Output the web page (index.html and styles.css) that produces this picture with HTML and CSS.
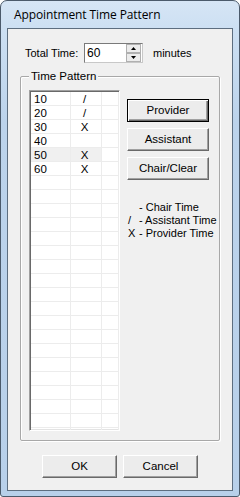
FILE: index.html
```html
<!DOCTYPE html>
<html>
<head>
<meta charset="utf-8">
<link rel="stylesheet" href="styles.css">
</head>
<body>
<div class="window">
  <div class="titlebar">Appointment Time Pattern</div>
  <div class="client">
    <div class="total-row">
      <span class="total-label">Total Time:</span>
      <div class="spin">
        <span class="spin-value">60</span>
        <div class="spin-btns">
          <div class="spin-btn"><svg width="5" height="3" viewBox="0 0 5 3"><path d="M2.5 0 L5 3 L0 3 Z" fill="#000"/></svg></div>
          <div class="spin-btn"><svg width="5" height="3" viewBox="0 0 5 3"><path d="M0 0 L5 0 L2.5 3 Z" fill="#000"/></svg></div>
        </div>
      </div>
      <span class="minutes">minutes</span>
    </div>
    <div class="group">
      <span class="group-title">Time Pattern</span>
      <div class="group-body">
        <div class="list">
          <div class="row"><span class="c1">10</span><span class="c2">/</span><span class="c3"></span></div>
          <div class="row"><span class="c1">20</span><span class="c2">/</span><span class="c3"></span></div>
          <div class="row"><span class="c1">30</span><span class="c2">X</span><span class="c3"></span></div>
          <div class="row"><span class="c1">40</span><span class="c2"></span><span class="c3"></span></div>
          <div class="row sel"><span class="c1">50</span><span class="c2">X</span><span class="c3"></span></div>
          <div class="row"><span class="c1">60</span><span class="c2">X</span><span class="c3"></span></div>
          <div class="row"><span class="c1"></span><span class="c2"></span><span class="c3"></span></div>
          <div class="row"><span class="c1"></span><span class="c2"></span><span class="c3"></span></div>
          <div class="row"><span class="c1"></span><span class="c2"></span><span class="c3"></span></div>
          <div class="row"><span class="c1"></span><span class="c2"></span><span class="c3"></span></div>
          <div class="row"><span class="c1"></span><span class="c2"></span><span class="c3"></span></div>
          <div class="row"><span class="c1"></span><span class="c2"></span><span class="c3"></span></div>
          <div class="row"><span class="c1"></span><span class="c2"></span><span class="c3"></span></div>
          <div class="row"><span class="c1"></span><span class="c2"></span><span class="c3"></span></div>
          <div class="row"><span class="c1"></span><span class="c2"></span><span class="c3"></span></div>
          <div class="row"><span class="c1"></span><span class="c2"></span><span class="c3"></span></div>
          <div class="row"><span class="c1"></span><span class="c2"></span><span class="c3"></span></div>
          <div class="row"><span class="c1"></span><span class="c2"></span><span class="c3"></span></div>
          <div class="row"><span class="c1"></span><span class="c2"></span><span class="c3"></span></div>
          <div class="row"><span class="c1"></span><span class="c2"></span><span class="c3"></span></div>
          <div class="row"><span class="c1"></span><span class="c2"></span><span class="c3"></span></div>
          <div class="row"><span class="c1"></span><span class="c2"></span><span class="c3"></span></div>
          <div class="row"><span class="c1"></span><span class="c2"></span><span class="c3"></span></div>
          <div class="row"><span class="c1"></span><span class="c2"></span><span class="c3"></span></div>
          <div class="row"><span class="c1"></span><span class="c2"></span><span class="c3"></span></div>
        </div>
        <div class="side">
          <div class="btn default">Provider</div>
          <div class="btn">Assistant</div>
          <div class="btn">Chair/Clear</div>
          <div class="legend">
            <span class="sym"></span><span>- Chair Time</span>
            <span class="sym">/</span><span>- Assistant Time</span>
            <span class="sym">X</span><span>- Provider Time</span>
          </div>
        </div>
      </div>
    </div>
    <div class="footer">
      <div class="btn small">OK</div>
      <div class="btn small">Cancel</div>
    </div>
  </div>
</div>
</body>
</html>
```

FILE: styles.css
```css
html, body {
  margin: 0;
  padding: 0;
  background: #ffffff;
}
body {
  font-family: "Liberation Sans", Arial, sans-serif;
  font-size: 11px;
  color: #000;
}
.window {
  width: 240px;
  height: 497px;
  box-sizing: border-box;
  border: 1px solid #4b5a6b;
  border-radius: 7px 7px 3px 3px;
  background: linear-gradient(#d6e5f5 0px, #cde0f3 26px, #bcd3eb 120px, #b8d0ea 100%);
  padding: 0 6px 5px 6px;
  display: flex;
  flex-direction: column;
}
.titlebar {
  height: 27px;
  line-height: 27px;
  padding-left: 7px;
  font-size: 12px;
  font-family: "Open Sans", "Liberation Sans", sans-serif;
  letter-spacing: -0.1px;
  flex: none;
}
.client {
  flex: 1;
  border: 1px solid #5d6e80;
  background: #f0f0f0;
  display: flex;
  flex-direction: column;
}
.total-row {
  display: flex;
  align-items: center;
  margin-top: 14px;
  padding-left: 17px;
  height: 20px;
}
.total-label {
  width: 59px;
}
.spin {
  width: 59px;
  height: 20px;
  box-sizing: border-box;
  border: 1px solid #7a7a7a;
  border-right-color: #c8c8c8;
  border-bottom-color: #c8c8c8;
  background: #fff;
  display: flex;
  align-items: stretch;
}
.spin-value {
  flex: 1;
  padding-left: 2px;
  font-size: 12px;
  line-height: 18px;
}
.spin-btns {
  width: 15px;
  display: flex;
  flex-direction: column;
  padding: 0 1px 0 0;
}
.spin-btn {
  flex: 1;
  box-sizing: border-box;
  border: 1px solid #b0b0b0;
  background: #ececec;
  display: flex;
  align-items: center;
  justify-content: center;
}
.minutes {
  margin-left: 10px;
}
.group {
  position: relative;
  margin: 13px 0 0 12px;
  width: 200px;
  height: 365px;
  box-sizing: border-box;
  border: 1px solid #a8a8a8;
  border-radius: 2px;
  box-shadow: inset 1px 1px 0 #fff, 1px 1px 0 #fff;
}
.group-title {
  position: absolute;
  left: 8px;
  top: -8px;
  padding: 0 2px;
  background: #f0f0f0;
  line-height: 14px;
  font-size: 11.5px;
}
.group-body {
  display: flex;
  padding: 13px 0 0 8px;
}
.list {
  width: 91px;
  height: 341px;
  box-sizing: border-box;
  border-top: 1px solid #a0a0a0;
  border-left: 1px solid #a0a0a0;
  border-right: 1px solid #fff;
  border-bottom: 1px solid #fff;
  box-shadow: inset 1px 1px 0 #696969, inset -1px -1px 0 #e3e3e3;
  background: #fff;
  padding: 1px 0 0 1px;
  overflow: hidden;
  flex: none;
}
.row {
  display: flex;
  height: 14px;
  line-height: 14px;
  font-size: 11.5px;
}
.row span {
  box-sizing: border-box;
  border-bottom: 1px solid #ececec;
  border-right: 1px solid #ececec;
}
.c1 {
  width: 40px;
  padding-left: 3px;
}
.c2 {
  width: 31px;
  text-align: center;
  padding-right: 3px;
}
.c3 {
  width: 17px;
}
.row.sel .c1, .row.sel .c2 {
  background: #f0f0f0;
}
.side {
  margin-left: 7px;
  margin-top: 9px;
  display: flex;
  flex-direction: column;
  gap: 6px;
}
.btn {
  width: 82px;
  height: 23px;
  box-sizing: border-box;
  background: #ececec;
  border-top: 1px solid #fff;
  border-left: 1px solid #fff;
  border-right: 1px solid #696969;
  border-bottom: 1px solid #696969;
  box-shadow: inset -1px -1px 0 #a0a0a0;
  display: flex;
  align-items: center;
  justify-content: center;
  padding-bottom: 1px;
  font-size: 11.5px;
}
.btn.default {
  border: 1px solid #000;
  box-shadow: inset 1px 1px 0 #fff, inset -1px -1px 0 #696969, inset -2px -2px 0 #a0a0a0;
}
.legend {
  margin-top: 15px;
  margin-left: 1px;
  display: grid;
  grid-template-columns: 11px auto;
  line-height: 13px;
  font-size: 11px;
  white-space: nowrap;
}
.footer {
  display: flex;
  gap: 6px;
  margin: 14px 0 0 34px;
}
.btn.small {
  width: 75px;
  height: 23px;
}
```
